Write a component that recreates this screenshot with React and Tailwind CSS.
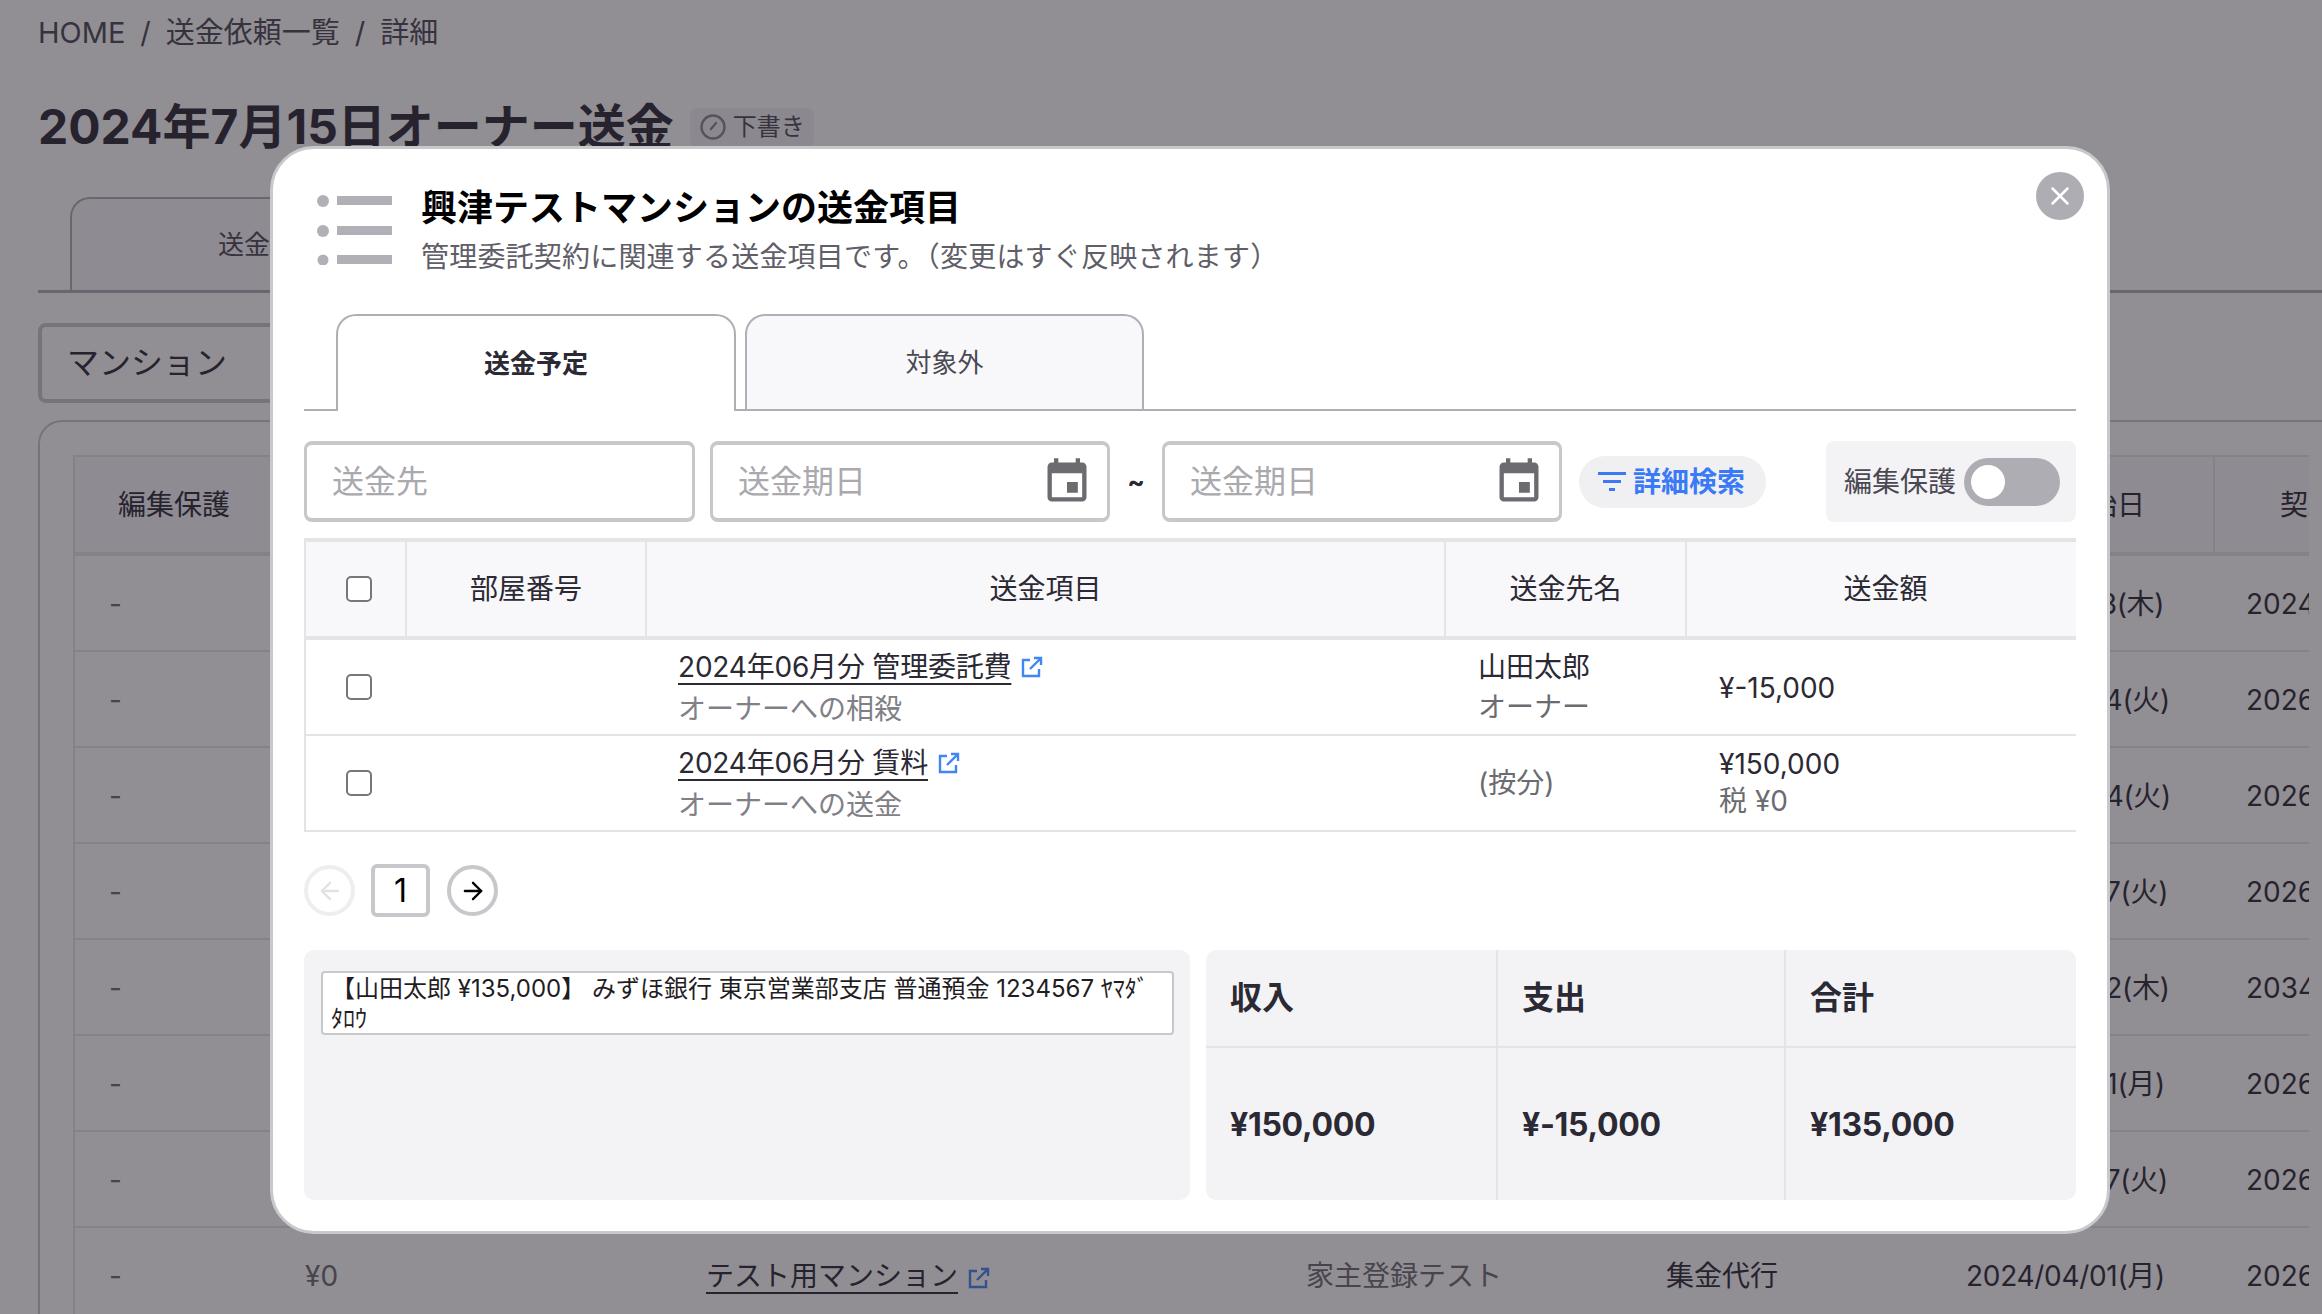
import { ArrowLeft, ArrowRight, X } from "lucide-react";

const LinkIcon = ({ className }) => (
  <svg viewBox="0 0 22 22" fill="none" stroke="currentColor" strokeWidth="2.4" className={className}>
    <path d="M9 4H2v16h16v-7" />
    <path d="M9 13L20 2M13 2h7v7" />
  </svg>
);

const CalendarIcon = () => (
  <svg viewBox="0 0 24 24" fill="#6b6b70" className="w-[52px] h-[52px] shrink-0">
    <path d="M17 12h-5v5h5v-5zM16 1v2H8V1H6v2H5c-1.11 0-1.99.9-1.99 2L3 19c0 1.1.89 2 2 2h14c1.1 0 2-.9 2-2V5c0-1.1-.9-2-2-2h-1V1h-2zm3 18H5V8h14v11z" />
  </svg>
);

const rows = [
  ["2024/10/03(木)", "2024/10/03"],
  ["2024/09/24(火)", "2026/03/31"],
  ["2024/06/04(火)", "2026/03/31"],
  ["2024/08/27(火)", "2026/03/31"],
  ["2024/05/02(木)", "2034/03/31"],
  ["2024/04/01(月)", "2026/03/31"],
  ["2024/02/27(火)", "2026/03/31"],
  ["2024/04/01(月)", "2026/03/31"],
];

const BackgroundPage = () => {
  return (
    <div className="text-[#2b2933]">
      <div className="flex items-center gap-[15px] pl-[38px] pt-[13px] h-[53px] text-[29px] leading-[40px] text-[#4a4852]">
        <span>HOME</span>
        <span>/</span>
        <span>送金依頼一覧</span>
        <span>/</span>
        <span>詳細</span>
      </div>
      <div className="flex items-center pl-[38px] mt-[47px] h-[54px]">
        <h1 className="text-[48px] leading-[54px] font-bold whitespace-nowrap">2024年7月15日オーナー送金</h1>
        <div className="flex items-center gap-[7px] ml-[16px] w-[124px] h-[38px] pl-[10px] bg-[#f3f3f5] rounded-[6px] text-[24px] text-[#4a4852]">
          <svg viewBox="0 0 26 26" fill="none" stroke="#8a8990" strokeWidth="2.4" className="w-[26px] h-[26px] shrink-0">
            <circle cx="13" cy="13" r="11.5" />
            <path d="M11 15l5-6" strokeLinecap="round" />
          </svg>
          <span>下書き</span>
        </div>
      </div>
      <div className="flex ml-[38px] pl-[32px] mt-[43px] border-b-[3px] border-[#b0afb5]">
        <div className="w-[400px] h-[93px] flex items-center justify-center border-2 border-b-0 border-[#b0afb5] rounded-t-[20px] text-[26px] text-[#4a4852] bg-[#f8f8fa]">
          送金一覧
        </div>
      </div>
      <div className="ml-[38px] mt-[30px] w-[500px] h-[80px] flex items-center pl-[25px] border-4 border-[#c8c8cc] rounded-[8px] text-[32px]">
        マンション
      </div>
      <div className="ml-[38px] mt-[17px] w-[2320px] border-2 border-r-0 border-[#c8c8cc] rounded-tl-[24px] pl-[33px] pt-[33px]">
        <div className="w-[2236px] overflow-hidden">
          <table className="table-fixed w-[2400px] border-separate border-spacing-0 text-[28px]">
            <colgroup>
              <col className="w-[200px]" />
              <col className="w-[401px]" />
              <col className="w-[600px]" />
              <col className="w-[360px]" />
              <col className="w-[301px]" />
              <col className="w-[278px]" />
              <col className="w-[272px]" />
            </colgroup>
            <thead>
              <tr className="h-[101px] bg-[#f8f8fa] font-normal">
                <th className="font-normal border-l-2 border-t-2 border-b-4 border-[#e4e4e6]">編集保護</th>
                <th className="font-normal border-l-2 border-t-2 border-b-4 border-[#e4e4e6]">金額</th>
                <th className="font-normal border-l-2 border-t-2 border-b-4 border-[#e4e4e6]">物件名</th>
                <th className="font-normal border-l-2 border-t-2 border-b-4 border-[#e4e4e6]">家主名</th>
                <th className="font-normal border-l-2 border-t-2 border-b-4 border-[#e4e4e6]">契約種別</th>
                <th className="font-normal border-l-2 border-t-2 border-b-4 border-[#e4e4e6]">契約開始日</th>
                <th className="font-normal border-l-2 border-t-2 border-b-4 border-[#e4e4e6]">契約終了日</th>
              </tr>
            </thead>
            <tbody>
              {rows.map((row, i) => (
                <tr key={i} className="h-[96px]">
                  <td className="pl-[34px] pt-[2px] border-l-2 border-b-2 border-[#e4e4e6] text-[#6b6b70]">-</td>
                  <td className="pl-[32px] pt-[2px] border-b-2 border-[#e4e4e6] text-[#6b6b70]">¥0</td>
                  <td className="pl-[32px] pt-[2px] border-b-2 border-[#e4e4e6]">
                    <span className="underline underline-offset-[6px]">テスト用マンション</span>
                    <LinkIcon className="inline-block ml-[10px] w-[22px] h-[22px] text-[#4285f4]" />
                  </td>
                  <td className="pl-[32px] pt-[2px] border-b-2 border-[#e4e4e6] text-[#6b6b70]">家主登録テスト</td>
                  <td className="pl-[32px] pt-[2px] border-b-2 border-[#e4e4e6]">集金代行</td>
                  <td className="pl-[31px] pt-[2px] border-b-2 border-[#e4e4e6] tracking-[-0.3px]">{row[0]}</td>
                  <td className="pl-[33px] pt-[2px] border-b-2 border-[#e4e4e6] whitespace-nowrap">{row[1]}</td>
                </tr>
              ))}
            </tbody>
          </table>
        </div>
      </div>
    </div>
  );
};

const DateField = ({ className }) => {
  return (
    <div className={"flex items-center justify-between h-[81px] pl-[25px] pr-[14px] border-[3px] border-t-4 border-b-4 border-[#c8c8cc] rounded-[8px] " + className}>
      <input placeholder="送金期日" className="w-[200px] outline-none text-[32px] placeholder:text-[#a9a9ae]" />
      <CalendarIcon />
    </div>
  );
};

const ItemRow = ({ title, sub, children, iconGap }) => {
  return (
    <tr className="h-[96px]">
      <td className="border-l-2 border-b-2 border-[#e4e4e6]">
        <input type="checkbox" className="block appearance-none ml-[40px] w-[26px] h-[26px] border-2 border-[#77767c] rounded-[5px] bg-white" />
      </td>
      <td className="border-b-2 border-[#e4e4e6]"></td>
      <td className="pl-[33px] pt-[2px] border-b-2 border-[#e4e4e6]">
        <div className="leading-[41px] tracking-[-0.2px]">
          <span className="underline underline-offset-[6px] text-[#2b2933]">{title}</span>
          <LinkIcon className={"inline-block w-[22px] h-[22px] align-[-1px] text-[#4285f4] " + iconGap} />
        </div>
        <div className="mt-[1px] leading-[41px] text-[#808086]">{sub}</div>
      </td>
      {children}
    </tr>
  );
};

const Modal = () => {
  return (
    <div className="absolute left-[270px] top-[146px] w-[1840px] h-[1088px] bg-white border-[3px] border-[#c9c9cc] rounded-[44px] px-[31px] pt-[35px] text-[#2b2933]">
      <button className="absolute right-[23px] top-[23px] w-[48px] h-[48px] rounded-full bg-[#aeadb3] flex items-center justify-center text-white">
        <X size={30} strokeWidth={2} />
      </button>

      <div className="flex pl-[13px]">
        <svg viewBox="0 0 75 70" fill="#b0b0b6" className="w-[75px] h-[70px] mt-[11px] shrink-0">
          <circle cx="6" cy="6" r="6" />
          <rect x="20" y="1" width="55" height="9" />
          <circle cx="6" cy="36" r="6" />
          <rect x="20" y="31" width="55" height="9" />
          <circle cx="6" cy="65" r="5.5" />
          <rect x="20" y="60" width="55" height="9" />
        </svg>
        <div className="ml-[29px]">
          <h2 className="text-[36px] leading-[48px] font-bold text-black">興津テストマンションの送金項目</h2>
          <p className="mt-[5px] text-[28px] leading-[40px] tracking-[0.2px] text-[#605e68]">管理委託契約に関連する送金項目です。（変更はすぐ反映されます）</p>
        </div>
      </div>

      <div className="flex gap-[9px] pl-[32px] mt-[37px] border-b-2 border-[#b0afb5] text-[26px]">
        <div className="w-[400px] h-[97px] -mb-[2px] flex items-center justify-center bg-white border-2 border-b-0 border-[#b0afb5] rounded-t-[20px] font-bold">
          送金予定
        </div>
        <div className="w-[399px] h-[95px] flex items-center justify-center bg-[#f8f8fa] border-2 border-b-0 border-[#b0afb5] rounded-t-[20px] text-[#4a4852]">
          対象外
        </div>
      </div>

      <div className="flex items-center mt-[30px]">
        <input placeholder="送金先" className="w-[391px] h-[81px] px-[25px] border-[3px] border-t-4 border-b-4 border-[#c8c8cc] rounded-[8px] outline-none text-[32px] placeholder:text-[#a9a9ae]" />
        <DateField className="w-[400px] ml-[15px]" />
        <span className="w-[52px] text-center text-[26px] font-bold">~</span>
        <DateField className="w-[400px]" />
        <button className="flex items-center gap-[7px] ml-[17px] w-[187px] h-[52px] pl-[19px] rounded-full bg-[#f0f0f2] text-[28px] font-bold text-[#3b7af7] whitespace-nowrap">
          <svg viewBox="0 0 28 20" fill="#3b7af7" className="w-[28px] h-[20px] shrink-0">
            <rect x="0" y="0" width="28" height="3" />
            <rect x="5" y="8" width="18" height="3" />
            <rect x="11" y="16" width="6" height="3" />
          </svg>
          詳細検索
        </button>
        <div className="flex items-center gap-[8px] ml-auto w-[250px] h-[81px] pl-[18px] bg-[#f3f3f5] rounded-[8px] text-[28px] text-[#4a4852] whitespace-nowrap">
          編集保護
          <div className="w-[96px] h-[48px] rounded-full bg-[#aeadb3] flex items-center pl-[7px]">
            <div className="w-[34px] h-[34px] rounded-full bg-white"></div>
          </div>
        </div>
      </div>

      <table className="table-fixed w-full mt-[16px] border-separate border-spacing-0 text-[28px]">
        <colgroup>
          <col className="w-[101px]" />
          <col className="w-[240px]" />
          <col className="w-[799px]" />
          <col className="w-[241px]" />
          <col />
        </colgroup>
        <thead>
          <tr className="h-[102px] bg-[#f8f8fa]">
            <th className="font-normal border-l-2 border-t-4 border-b-4 border-[#e4e4e6]">
              <input type="checkbox" className="block appearance-none ml-[40px] w-[26px] h-[26px] border-2 border-[#77767c] rounded-[5px] bg-white" />
            </th>
            <th className="font-normal border-l-2 border-t-4 border-b-4 border-[#e4e4e6]">部屋番号</th>
            <th className="font-normal border-l-2 border-t-4 border-b-4 border-[#e4e4e6]">送金項目</th>
            <th className="font-normal border-l-2 border-t-4 border-b-4 border-[#e4e4e6]">送金先名</th>
            <th className="font-normal pl-[8px] border-l-2 border-t-4 border-b-4 border-[#e4e4e6]">送金額</th>
          </tr>
        </thead>
        <tbody>
          <ItemRow title="2024年06月分 管理委託費" sub="オーナーへの相殺" iconGap="ml-[10px]">
            <td className="pl-[34px] border-b-2 border-[#e4e4e6]">
              <div className="leading-[40px]">山田太郎</div>
              <div className="leading-[40px] text-[#6b6b70]">オーナー</div>
            </td>
            <td className="pl-[34px] pt-[2px] border-b-2 border-[#e4e4e6]">¥-15,000</td>
          </ItemRow>
          <ItemRow title="2024年06月分 賃料" sub="オーナーへの送金" iconGap="ml-[10px]">
            <td className="pl-[34px] border-b-2 border-[#e4e4e6] text-[#6b6b70]">(按分)</td>
            <td className="pl-[34px] border-b-2 border-[#e4e4e6]">
              <div className="leading-[37px]">¥150,000</div>
              <div className="leading-[37px] text-[#6b6b70]">税 ¥0</div>
            </td>
          </ItemRow>
        </tbody>
      </table>

      <div className="flex items-center mt-[32px]">
        <button className="w-[51px] h-[51px] rounded-full border-4 border-[#eeeeef] flex items-center justify-center text-[#e2e2e4]">
          <ArrowLeft size={28} strokeWidth={2} />
        </button>
        <div className="ml-[16px] w-[59px] h-[53px] border-4 border-[#c8c8cc] rounded-[6px] flex items-center justify-center text-[32px] text-black">
          1
        </div>
        <button className="ml-[17px] w-[51px] h-[51px] rounded-full border-4 border-[#c8c8cc] flex items-center justify-center text-black">
          <ArrowRight size={28} strokeWidth={2} />
        </button>
      </div>

      <div className="flex gap-[16px] mt-[33px] h-[250px]">
        <div className="w-[886px] bg-[#f3f3f5] rounded-[10px] pt-[21px] pl-[17px] pr-[16px]">
          <div className="h-[64px] bg-white border-2 border-[#c8c8cc] rounded-[4px] pl-[8px] pt-[1px] pr-[20px] text-[24px] leading-[30px] text-[#1f1d24]">
            【山田太郎 ¥135,000】 みずほ銀行 東京営業部支店 普通預金 1234567 ﾔﾏﾀﾞ ﾀﾛｳ
          </div>
        </div>
        <div className="flex-1 grid grid-cols-[292px_288px_1fr] grid-rows-[98px_1fr] bg-[#f3f3f5] rounded-[10px] text-[32px] font-bold">
          <div className="flex items-center pl-[24px] border-r-2 border-b-2 border-[#e4e4e6]">収入</div>
          <div className="flex items-center pl-[24px] border-r-2 border-b-2 border-[#e4e4e6]">支出</div>
          <div className="flex items-center pl-[24px] border-b-2 border-[#e4e4e6]">合計</div>
          <div className="flex items-center pl-[24px] pt-[2px] tracking-[-0.3px] border-r-2 border-[#e4e4e6]">¥150,000</div>
          <div className="flex items-center pl-[24px] pt-[2px] tracking-[-0.3px] border-r-2 border-[#e4e4e6]">¥-15,000</div>
          <div className="flex items-center pl-[24px] pt-[2px] tracking-[-0.3px]">¥135,000</div>
        </div>
      </div>
    </div>
  );
};

const App = () => {
  return (
    <div className="relative h-screen overflow-hidden bg-white font-['Inter','Noto_Sans_CJK_JP',sans-serif]">
      <BackgroundPage />
      <div className="absolute inset-0 bg-[#231d29]/50"></div>
      <Modal />
    </div>
  );
};

export default App;
